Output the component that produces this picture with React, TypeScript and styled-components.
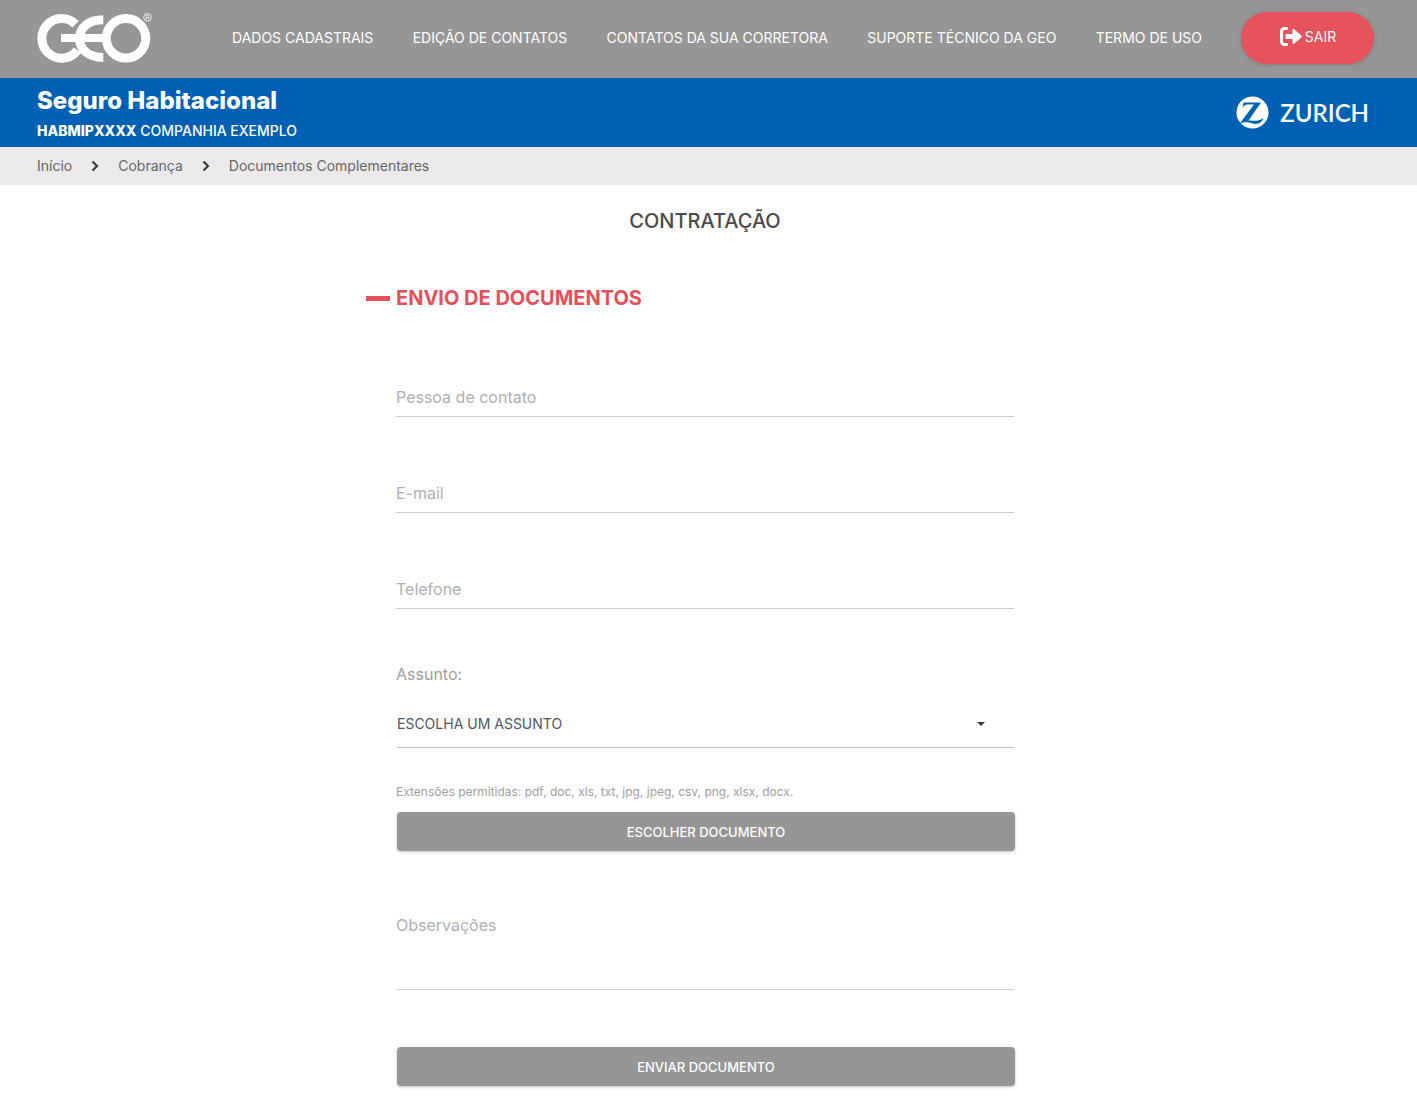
import React from "react";
import styled, { createGlobalStyle } from "styled-components";

const GlobalStyle = createGlobalStyle`
  *, *::before, *::after { box-sizing: border-box; }
  body { margin: 0; background: #fff; font-family: Inter, "Liberation Sans", sans-serif; }
`;

const TopBar = styled.header`
  display: flex;
  align-items: center;
  min-height: 78px;
  padding: 0 43px 2px 37px;
  background: #969696;
`;

const LogoLink = styled.a`
  display: flex;
  flex: none;
`;

const MainNav = styled.nav`
  flex: 1;
  display: flex;
  justify-content: space-between;
  margin: 0 39px 0 80px;
`;

const NavLink = styled.a`
  font-size: 14px;
  line-height: 20px;
  color: #fff;
  text-decoration: none;
  white-space: nowrap;
`;

const LogoutButton = styled.button`
  display: flex;
  align-items: center;
  justify-content: center;
  gap: 2px;
  width: 133px;
  height: 52px;
  padding: 0 0 2px;
  border: 0;
  border-radius: 26px;
  background: #e6535a;
  color: #fff;
  font: 400 14px/20px Inter, "Liberation Sans", sans-serif;
  box-shadow: 0 1px 4px rgba(0, 0, 0, 0.15);
`;

const ProductBar = styled.section`
  display: flex;
  align-items: center;
  justify-content: space-between;
  min-height: 69px;
  padding: 0 48px 0 37px;
  background: #0060b3;
  color: #fff;
`;

const ProductName = styled.h1`
  margin: 0;
  font-size: 24px;
  line-height: 36px;
  font-weight: 800;
`;

const Company = styled.p`
  margin: 0;
  font-size: 14px;
  line-height: 24px;
  font-weight: 500;
  strong { font-weight: 800; }
`;

const Insurer = styled.div`
  display: flex;
  align-items: center;
  gap: 11px;
  font: 600 24px/32px Lato, sans-serif;
`;

const Breadcrumb = styled.nav`
  display: flex;
  align-items: center;
  gap: 19px;
  min-height: 38px;
  padding: 0 37px;
  background: #ebe9ea;
`;

const Crumb = styled.a`
  font-size: 14px;
  line-height: 20px;
  color: #666;
  text-decoration: none;
`;

const Main = styled.main`
  padding: 20px 7px 28px 0;
`;

const PageTitle = styled.h2`
  margin: 0;
  text-align: center;
  font-size: 20px;
  line-height: 32px;
  font-weight: 500;
  color: #4a4a4a;
`;

const Form = styled.form`
  display: flex;
  flex-direction: column;
  width: 100%;
  max-width: 618px;
  margin: 0 auto;
`;

const SectionTitle = styled.h3`
  display: flex;
  align-items: center;
  gap: 6px;
  margin: 45px 0 31px -30px;
  font-size: 20px;
  line-height: 32px;
  font-weight: 700;
  color: #e6505a;
  &::before {
    content: "";
    width: 24px;
    height: 5px;
    background: currentColor;
  }
`;

const Field = styled.div`
  display: flex;
  padding-top: 32px;
  margin-bottom: 24px;
`;

const TextInput = styled.input`
  width: 100%;
  height: 40px;
  padding: 0;
  border: 0;
  border-bottom: 1px solid #cfcfcf;
  background: none;
  font: 16px/24px Inter, "Liberation Sans", sans-serif;
  color: #4a4a4a;
  &::placeholder { color: #b0b0b0; opacity: 1; }
`;

const Label = styled.label`
  margin-top: 29px;
  font-size: 16px;
  line-height: 24px;
  color: #9e9e9e;
`;

const SelectBox = styled.div`
  display: flex;
  align-items: center;
  margin: 14px 0 32px 1px;
  border-bottom: 1px solid #c4c4c4;
  svg { flex: none; margin: 0 29px 0 -37px; pointer-events: none; }
`;

const Select = styled.select`
  flex: 1;
  height: 47px;
  padding: 0;
  border: 0;
  background: none;
  appearance: none;
  font: 14px/20px Inter, "Liberation Sans", sans-serif;
  color: #4d5666;
`;

const Hint = styled.p`
  margin: 0 0 8px;
  font-size: 12px;
  line-height: 24px;
  color: #9e9e9e;
`;

const ActionButton = styled.button`
  height: 39px;
  margin: 0 -1px 0 1px;
  padding: 0;
  border: 0;
  border-radius: 4px;
  background: #969696;
  color: #fff;
  font: 500 13px/20px Inter, "Liberation Sans", sans-serif;
  box-shadow: 0 1px 3px rgba(0, 0, 0, 0.25);
`;

const TextArea = styled.textarea`
  display: block;
  height: 77px;
  margin: 62px 0 57px;
  padding: 0;
  border: 0;
  border-bottom: 1px solid #cfcfcf;
  resize: none;
  background: none;
  font: 16px/24px Inter, "Liberation Sans", sans-serif;
  color: #4a4a4a;
  &::placeholder { color: #b0b0b0; opacity: 1; }
`;

const GeoLogo = () => (
  <svg width="115" height="52" viewBox="37 12 115 52" fill="none" stroke="#fff" aria-hidden="true">
    <path d="M75.6 24.3A19.8 19.8 0 1 0 77.5 50.3" strokeWidth="9" />
    <path d="M61 38.1H107" strokeWidth="8" />
    <path d="M103.3 19.8C88 19.8 79.5 28 79.5 38.5S88 57.5 103.3 57.5" strokeWidth="9" />
    <circle cx="126" cy="38.3" r="19.7" strokeWidth="9" />
    <circle cx="147.5" cy="17.3" r="3.8" strokeWidth="0.8" />
    <path d="M146.2 19.5V15.3H148a1.2 1.2 0 0 1 0 2.4H146.2M148 17.7L149 19.5" strokeWidth="0.7" />
  </svg>
);

const LogoutIcon = () => (
  <svg width="24" height="22" viewBox="0 0 24 22" aria-hidden="true">
    <path d="M9 2.5H5.500a3 3 0 0 0-3 3v10a3 3 0 0 0 3 3H9" fill="none" stroke="#fff" strokeWidth="3" />
    <path d="M7.500 8h6V4.200c0-1.200 1.200-1.600 2-.8l7 6.300c.5.5.5 1.100 0 1.600l-7 6.300c-.8.8-2 .4-2-.8V13h-6c-.6 0-1-.4-1-1V9c0-.6.4-1 1-1z" fill="#fff" />
  </svg>
);

const Chevron = () => (
  <svg width="8" height="12" viewBox="0 0 8 12" aria-hidden="true">
    <path d="M1.500 1.500L6 6L1.500 10.500" fill="none" stroke="#3c3c3c" strokeWidth="2.200" />
  </svg>
);

const ZurichMark = () => (
  <svg width="33" height="33" viewBox="0 0 33 33" aria-hidden="true">
    <circle cx="16.500" cy="16.500" r="16" fill="#fff" />
    <path d="M7.500 6.500H25L12.500 24.500C17 24.200 21 26.500 27.500 22C25 29 19.500 28.500 14 26.800C10 25.800 7 26.500 3.800 27.500L18 8.500H11.500C9 8.500 8 10 6.500 12z" fill="#0060b3" />
  </svg>
);

const links = [
  "DADOS CADASTRAIS",
  "EDIÇÃO DE CONTATOS",
  "CONTATOS DA SUA CORRETORA",
  "SUPORTE TÉCNICO DA GEO",
  "TERMO DE USO",
];

const fields = [
  { name: "contato", label: "Pessoa de contato", type: "text" },
  { name: "email", label: "E-mail", type: "email" },
  { name: "telefone", label: "Telefone", type: "tel" },
];

export default function App() {
  return (
    <>
      <GlobalStyle />
      <TopBar>
        <LogoLink href="#" aria-label="GEO"><GeoLogo /></LogoLink>
        <MainNav>
          {links.map((l) => <NavLink key={l} href="#">{l}</NavLink>)}
        </MainNav>
        <LogoutButton type="button"><LogoutIcon />SAIR</LogoutButton>
      </TopBar>
      <ProductBar>
        <div>
          <ProductName>Seguro Habitacional</ProductName>
          <Company><strong>HABMIPXXXX</strong> COMPANHIA EXEMPLO</Company>
        </div>
        <Insurer><ZurichMark />ZURICH</Insurer>
      </ProductBar>
      <Breadcrumb>
        <Crumb href="#">Início</Crumb>
        <Chevron />
        <Crumb href="#">Cobrança</Crumb>
        <Chevron />
        <Crumb href="#">Documentos Complementares</Crumb>
      </Breadcrumb>
      <Main>
        <PageTitle>CONTRATAÇÃO</PageTitle>
        <Form>
          <SectionTitle>ENVIO DE DOCUMENTOS</SectionTitle>
          {fields.map((f) => (
            <Field key={f.name}>
              <TextInput name={f.name} type={f.type} placeholder={f.label} aria-label={f.label} />
            </Field>
          ))}
          <Label htmlFor="assunto">Assunto:</Label>
          <SelectBox>
            <Select id="assunto"><option>ESCOLHA UM ASSUNTO</option></Select>
            <svg width="8" height="4" viewBox="0 0 8 4" aria-hidden="true"><path d="M0 0H8L4 4z" fill="#343a40" /></svg>
          </SelectBox>
          <Hint>Extensões permitidas: pdf, doc, xls, txt, jpg, jpeg, csv, png, xlsx, docx.</Hint>
          <ActionButton type="button">ESCOLHER DOCUMENTO</ActionButton>
          <TextArea placeholder="Observações" aria-label="Observações" />
          <ActionButton type="submit">ENVIAR DOCUMENTO</ActionButton>
        </Form>
      </Main>
    </>
  );
}
